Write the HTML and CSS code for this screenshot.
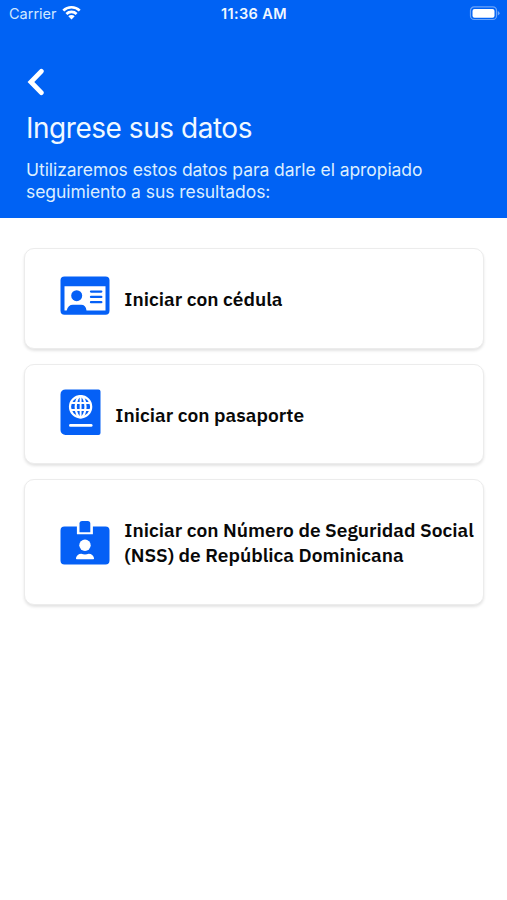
FILE: index.html
```html
<!DOCTYPE html>
<html lang="es">
<head>
<meta charset="utf-8">
<meta name="viewport" content="width=device-width, initial-scale=1">
<title>Ingrese sus datos</title>
<link rel="stylesheet" href="styles.css">
</head>
<body>
<header class="header">
  <div class="status">
    <div class="status-left">
      <span class="carrier">Carrier</span>
      <svg class="wifi" width="19" height="15" viewBox="0 0 19 15" fill="none" stroke="#fff" stroke-width="2.700">
        <path d="M1.300 5.600a11.700 11.700 0 0 1 16.400 0M4.400 9a7.300 7.300 0 0 1 10.200 0"/>
        <path d="M9.500 14.500 6.300 11.300a4.600 4.600 0 0 1 6.400 0Z" fill="#fff" stroke="none"/>
      </svg>
    </div>
    <span class="clock">11:36 AM</span>
    <svg class="battery" width="31" height="15" viewBox="0 0 31 15">
      <rect x="1.500" y=".9" width="26" height="12.600" rx="3.600" fill="none" stroke="#fff" stroke-opacity=".42" stroke-width="1.200"/>
      <rect x="3.500" y="2.900" width="22" height="8.800" rx="2" fill="#fff"/>
      <path d="M28.800 5v4.600q1.800-.8 1.800-2.300T28.800 5Z" fill="#fff" fill-opacity=".45"/>
    </svg>
  </div>
  <svg class="back" width="18" height="28" viewBox="0 0 18 28" fill="none" stroke="#fff" stroke-width="4.800" stroke-linecap="round" stroke-linejoin="miter">
    <path d="M14.300 3.300 3.900 14l10.400 10.700"/>
  </svg>
  <h1 class="title">Ingrese sus datos</h1>
  <p class="intro">Utilizaremos estos datos para darle el apropiado<br>seguimiento a sus resultados:</p>
</header>
<main class="options">
  <button class="card">
    <svg class="icon" width="50" height="40" viewBox="0 0 50 40">
      <rect x=".5" y=".5" width="49" height="38.200" rx="4" fill="#0560f6"/>
      <path d="M4.500 10.200h41v24.300h-19q-.6-5.800-5.500-5.800H13q-5 0-6.300 5.800H4.500Z" fill="#fff"/>
      <circle cx="16.700" cy="19.700" r="5.500" fill="#0560f6"/>
      <path d="M31 15.600h10.300M31 20.900h10.300M31 26.200h10.300" stroke="#0560f6" stroke-width="2.300" stroke-linecap="round"/>
    </svg>
    <span class="label">Iniciar con cédula</span>
  </button>
  <button class="card">
    <svg class="icon passport" width="41" height="47" viewBox="0 0 41 47">
      <path d="M5.500.4h33a2 2 0 0 1 2 2V44a2 2 0 0 1-2 2h-33a5 5 0 0 1-5-5V5.400a5 5 0 0 1 5-5Z" fill="#0560f6"/>
      <g fill="none" stroke="#fff" stroke-width="2.200">
        <circle cx="20.600" cy="17.700" r="10.600"/>
        <ellipse cx="20.600" cy="17.700" rx="4.900" ry="10.600"/>
        <path d="M20.600 7.100v21.200M10.500 14h20.200M10.500 21h20.200" stroke-width="1.900"/>
        <path d="M10.400 36.400h20.800" stroke-width="2.700" stroke-linecap="round"/>
      </g>
    </svg>
    <span class="label">Iniciar con pasaporte</span>
  </button>
  <button class="card tall">
    <svg class="icon badge" width="50" height="46" viewBox="0 0 50 46">
      <path d="M4.500 6.500h12.400v7.700h16V6.500h12.600a4 4 0 0 1 4 4v30a4 4 0 0 1-4 4h-41a4 4 0 0 1-4-4v-30a4 4 0 0 1 4-4Z" fill="#0560f6"/>
      <path d="M19.500 12.300V3.500q0-2.600 2.600-2.600h5.600q2.600 0 2.600 2.600v8.800Z" fill="#0560f6"/>
      <circle cx="25" cy="25.300" r="5.700" fill="#fff"/>
      <path d="M16.800 39.300q-1.100 0-.8-1.200 1-4.200 5.300-4.300 3.700 1.200 7.400 0 4.300.1 5.300 4.300.3 1.200-.8 1.200Z" fill="#fff"/>
    </svg>
    <span class="label">Iniciar con Número de Seguridad Social<br>(NSS) de República Dominicana</span>
  </button>
</main>
</body>
</html>
```
FILE: styles.css
```css
* { box-sizing: border-box; }
body { margin: 0; background: #fff; min-height: 900px; font-family: Inter, sans-serif; }
.header { background: #0062f4; color: #f0f8ff; height: 217.500px; }
.status { display: grid; grid-template-columns: 1fr auto 1fr; align-items: center; height: 28px; padding: 0 7px 0 9px; }
.status-left { display: flex; align-items: center; gap: 5px; }
.carrier { font-size: 14.500px; color: #d0e8ff; margin-top: -2px; }
.wifi { margin-top: -3px; }
.clock { font-size: 14.500px; font-weight: 600; letter-spacing: .35px; margin: -1px 1px 0 0; }
.battery { justify-self: end; margin-top: -1px; }
.back { display: block; margin: 40px 0 0 27px; }
.title { margin: 14px 0 0 26px; font-size: 28px; line-height: 36px; font-weight: 400; letter-spacing: -.47px; white-space: nowrap; }
.intro { margin: 13px 0 0 26px; font-size: 17.500px; line-height: 21.500px; letter-spacing: -.06px; color: #dceeff; white-space: nowrap; }
.options { display: flex; flex-direction: column; gap: 15px; padding: 30.500px 23px 0 24px; }
.card { display: flex; align-items: center; width: 100%; height: 100.500px; padding: 1px 0 0 35.300px; border: 1px solid #ececec; border-radius: 10px; background: #fff; box-shadow: 0 2px 3px rgba(0,0,0,.11); text-align: left; color: #080808; }
.card.tall { height: 125.500px; }
.icon { flex: none; margin-top: -6px; }
.icon.passport { margin-top: -4px; }
.icon.badge { margin-top: 1px; }
.label { margin-left: 14px; font-family: "IBM Plex Sans", "Noto Sans", sans-serif; font-size: 19.150px; font-weight: 600; line-height: 25px; white-space: nowrap; }
```
